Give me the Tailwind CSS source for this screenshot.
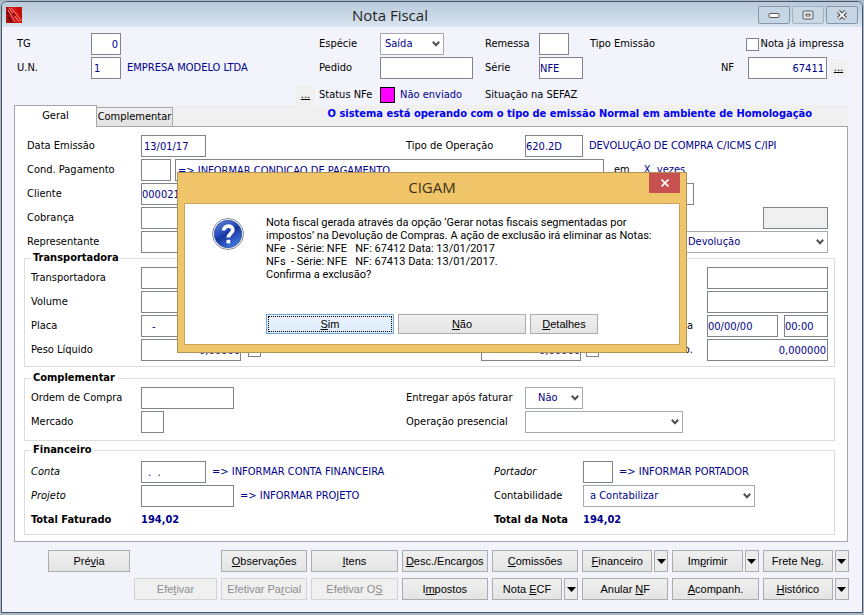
<!DOCTYPE html>
<html lang="pt-BR">
<head>
  <meta charset="UTF-8">
  <meta name="viewport" content="width=device-width, initial-scale=1.0">
  <title>Nota Fiscal</title>
  <script src="https://cdn.jsdelivr.net/npm/@tailwindcss/browser@4"></script>
</head>
<body class="min-h-screen bg-[#a9b9c9] px-px pt-px pb-0.5 flex flex-col text-[11px] leading-4 text-black whitespace-nowrap font-['DejaVu_Sans_Condensed','DejaVu_Sans',sans-serif]">
  <!-- Shared icons -->
  <svg class="hidden">
    <symbol id="chevron" viewBox="0 0 8 6"><path d="M0.8 0.8 L4 4.2 L7.2 0.8" fill="none" stroke="#505050" stroke-width="2"/></symbol>
    <symbol id="triangle" viewBox="0 0 9 5"><path d="M0 0 H9 L4.5 5 Z" fill="#000"/></symbol>
  </svg>

  <!-- Window -->
  <div class="flex-1 flex flex-col rounded-t-md border border-[#4a5562] bg-[#f2f3fb] overflow-hidden">
    <!-- Title bar -->
    <header class="h-[25px] flex items-center pl-1 pr-1 bg-linear-to-b from-[#b9c9d9] to-[#d9e5f0]">
      <svg class="w-4 h-4" viewBox="0 0 16 16">
        <rect width="16" height="16" fill="#d81414"/>
        <path d="M0 0 H3 L10 16 H0 Z" fill="#b00c0c"/>
        <path d="M9 0 H16 V12 Z" fill="#c40e0e"/>
        <path d="M3 1 L13 15 M5 1 C9 5 12 9 15 14 M2 3 L9 15" fill="none" stroke="#f6a098" stroke-width="0.9"/>
        <path d="M1 5 L3 8 M2 10 L5 15 M7 6 L9 9" stroke="#3c0000" stroke-width="1.2"/>
      </svg>
      <h1 class="flex-1 text-center text-[15px] text-[#1e1e1e] font-['Open_Sans',sans-serif]">Nota Fiscal</h1>
      <div class="flex gap-0.5">
        <button aria-label="Minimizar" class="w-8 h-[18px] grid place-items-center rounded-xs border border-[#8296ac] bg-[#c6d5e4]">
          <svg class="w-3 h-2" viewBox="0 0 12 8"><rect x="1" y="2.5" width="10" height="4" rx="1" fill="#fff" stroke="#555" stroke-width="1"/></svg>
        </button>
        <button aria-label="Restaurar" class="w-8 h-[18px] grid place-items-center rounded-xs border border-[#a3b3c5] bg-[#cad8e6]">
          <svg class="w-3 h-3" viewBox="0 0 12 12"><rect x="1" y="2" width="10" height="8" rx="1" fill="#e8eef4" stroke="#555"/><rect x="4" y="5" width="4" height="2" fill="#fff" stroke="#555"/></svg>
        </button>
        <button aria-label="Fechar" class="w-8 h-[18px] grid place-items-center rounded-xs border border-[#8296ac] bg-[#c6d5e4]">
          <svg class="w-3 h-2.5" viewBox="0 0 12 10"><path d="M2.5 1.5 L9.5 8.5 M9.5 1.5 L2.5 8.5" stroke="#505050" stroke-width="4"/><path d="M2.7 1.7 L9.3 8.3 M9.3 1.7 L2.7 8.3" stroke="#fff" stroke-width="1.8"/></svg>
        </button>
      </div>
    </header>

    <main class="flex-1 pl-3 pr-3.5">
      <!-- Invoice header -->
      <section class="grid grid-cols-[74px_228px_61px_105px_54px_51px_1fr] gap-y-0.5 items-center pt-1.5 pl-[3px]">
        <label for="tg">TG</label>
        <input id="tg" value="0" class="w-[30px] h-[22px] px-0.5 text-right bg-white border border-[#7f838c] text-[#00008c]">
        <label for="especie">Espécie</label>
        <div class="relative w-16">
          <select id="especie" class="w-full h-[22px] pl-1 appearance-none bg-white border border-[#a5a8ae] text-[#00008c]"><option>Saída</option></select>
          <svg class="absolute right-1 top-2 w-2 h-1.5 pointer-events-none"><use href="#chevron"/></svg>
        </div>
        <label for="remessa">Remessa</label>
        <input id="remessa" class="w-[30px] h-[22px] px-0.5 bg-white border border-[#7f838c] text-[#00008c]">
        <div class="flex items-center justify-between pr-1">
          <span>Tipo Emissão</span>
          <label class="flex items-center gap-0.5"><input type="checkbox" class="appearance-none w-[13px] h-[13px] bg-white border border-[#7f838c]">Nota já impressa</label>
        </div>

        <label for="un">U.N.</label>
        <div class="flex items-center gap-1.5">
          <input id="un" value="1" class="w-[30px] h-[22px] px-0.5 bg-white border border-[#7f838c] text-[#00008c]">
          <span class="text-[#00008c]">EMPRESA MODELO LTDA</span>
        </div>
        <label for="pedido">Pedido</label>
        <input id="pedido" class="w-[93px] h-[22px] px-0.5 bg-white border border-[#7f838c] text-[#00008c]">
        <label for="serie">Série</label>
        <input id="serie" value="NFE" class="w-11 h-[22px] px-0 bg-white border border-[#7f838c] text-[#00008c]">
        <div class="flex items-center justify-end pr-px">
          <label for="nf" class="pr-3.5">NF</label>
          <input id="nf" value="67411" class="w-[79px] h-[22px] px-0.5 text-right bg-white border border-[#7f838c] text-[#00008c]">
          <button class="ml-[3px] w-[17px] h-[18px] bg-[#f0f0f0] underline">...</button>
        </div>

        <div class="col-start-2 justify-self-end pr-1 pt-1"><button class="w-[19px] h-5 bg-[#f0f0f0] underline">...</button></div>
        <span class="pt-1">Status NFe</span>
        <div class="flex items-center gap-[5px] pt-1 text-[#00008c]"><span class="w-[15px] h-4 bg-[#ff00ff] border border-black"></span>Não enviado</div>
        <span class="pt-1 col-span-3">Situação na SEFAZ</span>
      </section>

      <!-- Tabs -->
      <div class="relative flex items-end h-[21px] bg-[#f0f0f0]" role="tablist">
        <button role="tab" aria-selected="true" class="relative z-10 -mb-px w-[83px] h-[22px] pb-0.5 bg-white border border-b-0 border-[#a5a5ac]">Geral</button>
        <button role="tab" class="w-[76px] h-[19px] bg-linear-to-b from-[#f0f0f0] to-[#e2e2e2] border border-l-0 border-b-0 border-[#a5a5ac]">Complementar</button>
        <strong class="flex-1 text-right pr-9 pb-1 text-[#0000f0]">O sistema está operando com o tipo de emissão Normal em ambiente de Homologação</strong>
      </div>

      <!-- Geral -->
      <section class="bg-white border border-[#a5a5ac] pt-2 pb-1.5 pl-[9px] pr-3">
        <div class="flex flex-col gap-0.5 pl-[3px] pr-[7px]">
          <div class="flex items-center">
            <label for="data" class="w-[114px]">Data Emissão</label>
            <div class="w-[265px]"><input id="data" value="13/01/17" class="w-[65px] h-[22px] px-0.5 bg-white border border-[#7f838c] text-[#00008c]"></div>
            <label for="operacao" class="w-[119px]">Tipo de Operação</label>
            <input id="operacao" value="620.2D" class="w-[58px] h-[22px] px-0 bg-white border border-[#7f838c] text-[#00008c]">
            <span class="pl-1.5 text-[#00008c]">DEVOLUÇÃO DE COMPRA C/ICMS C/IPI</span>
          </div>
          <div class="flex items-center">
            <label for="cond" class="w-[114px]">Cond. Pagamento</label>
            <input id="cond" class="w-[30px] h-[22px] px-0.5 bg-white border border-[#7f838c] text-[#00008c]">
            <input aria-label="Descrição da condição" value="=&gt; INFORMAR CONDICAO DE PAGAMENTO" class="ml-1 w-[429px] h-[22px] px-0.5 bg-white border border-[#7f838c] text-[#00008c]">
            <span class="pl-2.5">em</span>
            <span class="pl-3.5 text-[#00008c] whitespace-pre">X  vezes</span>
          </div>
          <div class="flex items-center">
            <label for="cliente" class="w-[114px]">Cliente</label>
            <input id="cliente" value="000021" class="w-[65px] h-[22px] px-0 bg-white border border-[#7f838c] text-[#00008c]">
            <input aria-label="Nome do cliente" class="ml-1 w-[484px] h-[22px] px-0.5 bg-white border border-[#7f838c] text-[#00008c]">
          </div>
          <div class="flex items-center">
            <label for="cobranca" class="w-[114px]">Cobrança</label>
            <input id="cobranca" class="w-[65px] h-[22px] px-0.5 bg-white border border-[#7f838c] text-[#00008c]">
            <input aria-label="Situação da cobrança" readonly class="ml-auto w-[65px] h-[22px] bg-[#f0f0f0] border border-[#7f838c]">
          </div>
          <div class="flex items-center">
            <label for="representante" class="w-[114px]">Representante</label>
            <input id="representante" class="w-[65px] h-[22px] px-0.5 bg-white border border-[#7f838c] text-[#00008c]">
            <div class="relative ml-auto w-[147px]">
              <select aria-label="Finalidade" class="w-full h-[22px] pl-1.5 appearance-none bg-white border border-[#a5a8ae] text-[#00008c]"><option>Devolução</option></select>
              <svg class="absolute right-1 top-2 w-2 h-1.5 pointer-events-none"><use href="#chevron"/></svg>
            </div>
          </div>
        </div>

        <fieldset class="-mt-[3px] border border-[#dcdcdc] px-1.5 pt-px pb-[5px]">
          <legend class="px-0.5 h-4 font-bold">Transportadora</legend>
          <div class="flex flex-col gap-0.5">
            <div class="flex items-center">
              <label for="transportadora" class="w-[110px]">Transportadora</label>
              <input id="transportadora" class="w-[65px] h-[22px] px-0.5 bg-white border border-[#7f838c] text-[#00008c]">
              <input aria-label="Redespacho" class="ml-auto w-[121px] h-[22px] px-0.5 bg-white border border-[#7f838c] text-[#00008c]">
            </div>
            <div class="flex items-center">
              <label for="volume" class="w-[110px]">Volume</label>
              <input id="volume" class="w-[65px] h-[22px] px-0.5 bg-white border border-[#7f838c] text-[#00008c]">
              <input aria-label="Marca" class="ml-auto w-[121px] h-[22px] px-0.5 bg-white border border-[#7f838c] text-[#00008c]">
            </div>
            <div class="flex items-center">
              <label for="placa" class="w-[110px]">Placa</label>
              <input id="placa" value="-" class="w-[65px] h-[22px] px-2.5 bg-white border border-[#7f838c] text-[#00008c]">
              <label for="saida" class="ml-auto pr-3.5">Data/Hora Saída</label>
              <input id="saida" value="00/00/00" class="w-[71px] h-[22px] px-0 bg-white border border-[#7f838c] text-[#00008c]">
              <input aria-label="Hora" value="00:00" class="ml-1.5 w-11 h-[22px] px-0 bg-white border border-[#7f838c] text-[#00008c]">
            </div>
            <div class="flex items-center">
              <label for="liquido" class="w-[110px]">Peso Líquido</label>
              <input id="liquido" value="0,00000" class="w-[100px] h-[22px] px-0 text-right bg-white border border-[#7f838c] text-[#00008c]">
              <input type="checkbox" aria-label="Fixar peso líquido" class="ml-[7px] appearance-none w-[13px] h-[13px] bg-white border border-[#7f838c]">
              <label for="bruto" class="pl-[145px] w-[220px]">Peso Bruto</label>
              <input id="bruto" value="0,00000" class="w-[100px] h-[22px] px-0 text-right bg-white border border-[#7f838c] text-[#00008c]">
              <input type="checkbox" aria-label="Fixar peso bruto" class="ml-[5px] appearance-none w-[13px] h-[13px] bg-white border border-[#7f838c]">
              <label for="extra" class="ml-auto pr-3.5">Peso Extra Emb.</label>
              <input id="extra" value="0,000000" class="w-[121px] h-[22px] px-px text-right bg-white border border-[#7f838c] text-[#00008c]">
            </div>
          </div>
        </fieldset>

        <fieldset class="mt-[3px] border border-[#dcdcdc] px-1.5 pt-px pb-[7px]">
          <legend class="px-0.5 h-4 font-bold">Complementar</legend>
          <div class="flex flex-col gap-0.5">
            <div class="flex items-center">
              <label for="ordem" class="w-[110px]">Ordem de Compra</label>
              <div class="w-[265px]"><input id="ordem" class="w-[93px] h-[22px] px-0.5 bg-white border border-[#7f838c] text-[#00008c]"></div>
              <label for="entregar" class="w-[119px]">Entregar após faturar</label>
              <div class="relative w-[58px]">
                <select id="entregar" class="w-full h-[22px] pl-3 appearance-none bg-white border border-[#a5a8ae] text-[#00008c]"><option>Não</option></select>
                <svg class="absolute right-1 top-2 w-2 h-1.5 pointer-events-none"><use href="#chevron"/></svg>
              </div>
            </div>
            <div class="flex items-center">
              <label for="mercado" class="w-[110px]">Mercado</label>
              <div class="w-[265px]"><input id="mercado" class="w-[23px] h-[22px] px-0.5 bg-white border border-[#7f838c] text-[#00008c]"></div>
              <label for="presencial" class="w-[119px]">Operação presencial</label>
              <div class="relative w-[158px]">
                <select id="presencial" class="w-full h-[22px] pl-1.5 appearance-none bg-white border border-[#a5a8ae] text-[#00008c]"><option></option></select>
                <svg class="absolute right-1 top-2 w-2 h-1.5 pointer-events-none"><use href="#chevron"/></svg>
              </div>
            </div>
          </div>
        </fieldset>

        <fieldset class="mt-px border border-[#dcdcdc] px-1.5 pt-[3px] pb-[3px]">
          <legend class="px-0.5 h-4 font-bold">Financeiro</legend>
          <div class="flex flex-col gap-0.5">
            <div class="flex items-center">
              <label for="conta" class="w-[110px] italic">Conta</label>
              <div class="w-[353px] flex items-center gap-1.5">
                <input id="conta" value=". &nbsp;." class="w-[65px] h-[22px] px-1.5 bg-white border border-[#7f838c] text-[#00008c]">
                <span class="text-[#00008c]">=&gt; INFORMAR CONTA FINANCEIRA</span>
              </div>
              <label for="portador" class="w-[89px] italic">Portador</label>
              <input id="portador" class="w-[30px] h-[22px] px-0.5 bg-white border border-[#7f838c] text-[#00008c]">
              <span class="pl-1.5 text-[#00008c]">=&gt; INFORMAR PORTADOR</span>
            </div>
            <div class="flex items-center">
              <label for="projeto" class="w-[110px] italic">Projeto</label>
              <div class="w-[353px] flex items-center gap-1.5">
                <input id="projeto" class="w-[93px] h-[22px] px-0.5 bg-white border border-[#7f838c] text-[#00008c]">
                <span class="text-[#00008c]">=&gt; INFORMAR PROJETO</span>
              </div>
              <label for="contabilidade" class="w-[89px]">Contabilidade</label>
              <div class="relative w-[172px]">
                <select id="contabilidade" class="w-full h-[22px] pl-1.5 appearance-none bg-white border border-[#a5a8ae] text-[#00008c]"><option>a Contabilizar</option></select>
                <svg class="absolute right-1 top-2 w-2 h-1.5 pointer-events-none"><use href="#chevron"/></svg>
              </div>
            </div>
            <div class="flex items-center h-[22px] font-bold">
              <span class="w-[110px]">Total Faturado</span>
              <span class="w-[353px] text-[#00008c]">194,02</span>
              <span class="w-[89px]">Total da Nota</span>
              <span class="text-[#00008c]">194,02</span>
            </div>
          </div>
        </fieldset>
      </section>

      <!-- Actions -->
      <section class="grid grid-cols-[82px_83px_repeat(7,1fr)] gap-x-1 gap-y-1.5 pt-2 pl-[34px] -mr-px font-['Liberation_Sans',sans-serif]">
        <button class="h-[22px] bg-linear-to-b from-[#f0f0f0] to-[#e4e4e4] border border-[#acacac]">Pré<u>v</u>ia</button>
        <button class="col-start-3 h-[22px] bg-linear-to-b from-[#f0f0f0] to-[#e4e4e4] border border-[#acacac]"><u>O</u>bservações</button>
        <button class="h-[22px] bg-linear-to-b from-[#f0f0f0] to-[#e4e4e4] border border-[#acacac]"><u>I</u>tens</button>
        <button class="h-[22px] bg-linear-to-b from-[#f0f0f0] to-[#e4e4e4] border border-[#acacac]"><u>D</u>esc./Encargos</button>
        <button class="h-[22px] bg-linear-to-b from-[#f0f0f0] to-[#e4e4e4] border border-[#acacac]"><u>C</u>omissões</button>
        <div class="flex gap-0.5">
          <button class="flex-1 h-[22px] bg-linear-to-b from-[#f0f0f0] to-[#e4e4e4] border border-[#acacac]"><u>F</u>inanceiro</button>
          <button aria-label="Mais opções de Financeiro" class="w-3.5 h-[22px] grid place-items-center bg-[#ececec] border border-[#acacac]"><svg class="w-[9px] h-[5px]"><use href="#triangle"/></svg></button>
        </div>
        <div class="flex gap-0.5">
          <button class="flex-1 h-[22px] bg-linear-to-b from-[#f0f0f0] to-[#e4e4e4] border border-[#acacac]">Im<u>p</u>rimir</button>
          <button aria-label="Mais opções de Imprimir" class="w-3.5 h-[22px] grid place-items-center bg-[#ececec] border border-[#acacac]"><svg class="w-[9px] h-[5px]"><use href="#triangle"/></svg></button>
        </div>
        <div class="flex gap-0.5">
          <button class="flex-1 h-[22px] bg-linear-to-b from-[#f0f0f0] to-[#e4e4e4] border border-[#acacac]">Frete Ne<u>g</u>.</button>
          <button aria-label="Mais opções de Frete" class="w-3.5 h-[22px] grid place-items-center bg-[#ececec] border border-[#acacac]"><svg class="w-[9px] h-[5px]"><use href="#triangle"/></svg></button>
        </div>

        <button disabled class="col-start-2 h-[22px] bg-[#f0f0f0] border border-[#d4d4d4] text-[#8c8c8c]">Efe<u>t</u>ivar</button>
        <button disabled class="h-[22px] bg-[#f0f0f0] border border-[#d4d4d4] text-[#8c8c8c]">Efetivar Pa<u>r</u>cial</button>
        <button disabled class="h-[22px] bg-[#f0f0f0] border border-[#d4d4d4] text-[#8c8c8c]">Efetivar O<u>S</u></button>
        <button class="h-[22px] bg-linear-to-b from-[#f0f0f0] to-[#e4e4e4] border border-[#acacac]">I<u>m</u>postos</button>
        <div class="flex gap-0.5">
          <button class="flex-1 h-[22px] bg-linear-to-b from-[#f0f0f0] to-[#e4e4e4] border border-[#acacac]">Nota <u>E</u>CF</button>
          <button aria-label="Mais opções de Nota ECF" class="w-3.5 h-[22px] grid place-items-center bg-[#ececec] border border-[#acacac]"><svg class="w-[9px] h-[5px]"><use href="#triangle"/></svg></button>
        </div>
        <button class="h-[22px] bg-linear-to-b from-[#f0f0f0] to-[#e4e4e4] border border-[#acacac]">Anular <u>N</u>F</button>
        <button class="h-[22px] bg-linear-to-b from-[#f0f0f0] to-[#e4e4e4] border border-[#acacac]"><u>A</u>companh.</button>
        <div class="flex gap-0.5">
          <button class="flex-1 h-[22px] bg-linear-to-b from-[#f0f0f0] to-[#e4e4e4] border border-[#acacac]"><u>H</u>istórico</button>
          <button aria-label="Mais opções de Histórico" class="w-3.5 h-[22px] grid place-items-center bg-[#ececec] border border-[#acacac]"><svg class="w-[9px] h-[5px]"><use href="#triangle"/></svg></button>
        </div>
      </section>
    </main>
  </div>

  <!-- Confirmation dialog -->
  <div role="dialog" aria-labelledby="dialog-title" class="absolute z-20 top-[172px] inset-x-0 mx-auto w-[510px] bg-[#f0c569] border border-[#b0935a] px-1.5 pb-[7px]">
    <div class="relative h-[30px]">
      <h2 id="dialog-title" class="text-center text-[15px] leading-[28px] text-[#3a3018] font-['Open_Sans',sans-serif]">CIGAM</h2>
      <button aria-label="Fechar" class="absolute right-0 top-0 w-[31px] h-5 grid place-items-center bg-[#c75050]">
        <svg class="w-2 h-2" viewBox="0 0 8 8"><path d="M0.5 0.5 L7.5 7.5 M7.5 0.5 L0.5 7.5" stroke="#fff" stroke-width="1.6"/></svg>
      </button>
    </div>
    <div class="bg-white border border-[#c9a55a] pt-3 pb-2.5 pl-[27px]">
      <div class="flex gap-[22px]">
        <svg class="w-8 h-8 mt-0.5" viewBox="0 0 32 32">
          <defs>
            <linearGradient id="ball" x1="0" y1="0" x2="0.6" y2="1"><stop offset="0" stop-color="#6a8ce0"/><stop offset="0.5" stop-color="#2145b4"/><stop offset="0.55" stop-color="#16359c"/><stop offset="1" stop-color="#3f74dc"/></linearGradient>
          </defs>
          <circle cx="16" cy="16" r="15.5" fill="#fff" stroke="#8a8f99"/>
          <circle cx="16" cy="16" r="13.8" fill="url(#ball)" stroke="#1c3a8c" stroke-width="0.6"/>
          <path d="M11.6 12.6 C11.6 6.8 20.8 6.8 20.8 12 C20.8 15.4 16.4 15.4 16.4 19.6" fill="none" stroke="#fff" stroke-width="3.8"/>
          <rect x="14.5" y="21.8" width="3.8" height="3.8" rx="1" fill="#fff"/>
        </svg>
        <p class="leading-[13px] whitespace-pre font-[Roboto,sans-serif]">Nota fiscal gerada através da opção ‘Gerar notas fiscais segmentadas por
impostos’ na Devolução de Compras. A ação de exclusão irá eliminar as Notas:
NFe  - Série: NFE   NF: 67412 Data: 13/01/2017
NFs  - Série: NFE   NF: 67413 Data: 13/01/2017.
Confirma a exclusão?</p>
      </div>
      <div class="flex gap-1 pt-[33px] pl-[54px] font-['Liberation_Sans',sans-serif]">
        <button class="w-32 h-5 p-px border border-[#6fa8e0] bg-linear-to-b from-[#eaf3fd] to-[#dbeafa]"><span class="h-full flex items-center justify-center border border-dotted border-black"><u>S</u>im</span></button>
        <button class="w-32 h-5 bg-linear-to-b from-[#f0f0f0] to-[#e4e4e4] border border-[#acacac]"><u>N</u>ão</button>
        <button class="w-[68px] h-5 bg-linear-to-b from-[#f0f0f0] to-[#e4e4e4] border border-[#acacac]"><u>D</u>etalhes</button>
      </div>
    </div>
  </div>
</body>
</html>
